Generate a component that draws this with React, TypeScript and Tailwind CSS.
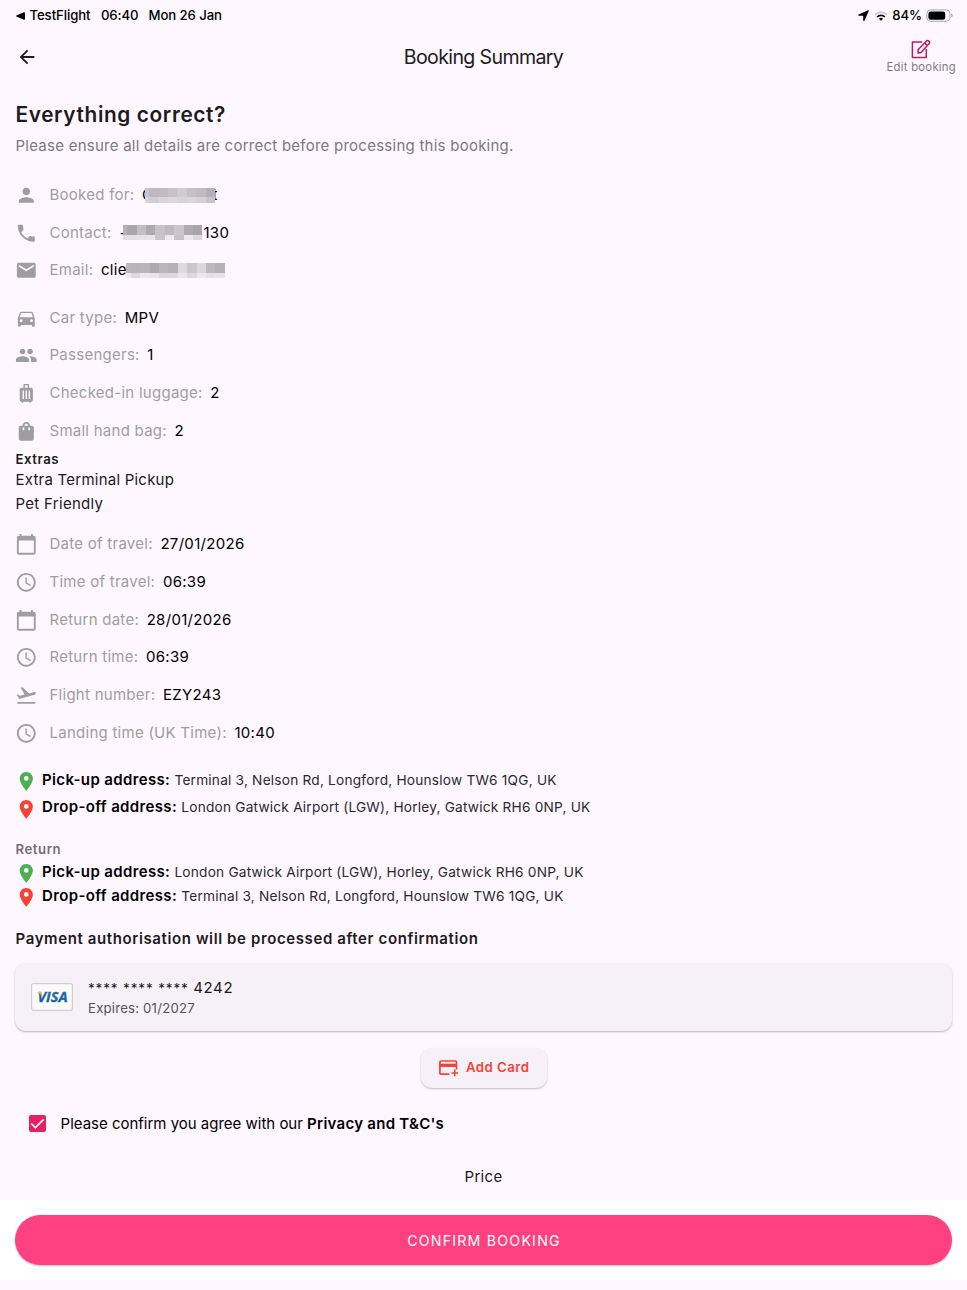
import React from "react";
import {
  MdPerson, MdPhone, MdEmail, MdDirectionsCar, MdPeople, MdLuggage, MdShoppingBag,
  MdCalendarToday, MdAccessTime, MdFlightTakeoff, MdLocationOn, MdArrowBack,
} from "react-icons/md";

type IconType = React.ComponentType<{ className?: string }>;

function Row({ icon: Icon, label, children }: { icon: IconType; label: string; children: React.ReactNode }) {
  return (
    <div className="flex h-[37.75px] shrink-0 items-center text-[15px]">
      <Icon className="-ml-[0.6px] mr-[12px] size-[22.6px] text-[#9e9e9e]" />
      <span className="whitespace-pre tracking-[0.26px] text-[#9e9e9e]">{label}</span>
      <span className="ml-[7.7px] flex items-center whitespace-pre tracking-[0.3px] text-black">{children}</span>
    </div>
  );
}

function Mosaic({ cells, first, split, className = "" }: { cells: [string, string][]; first: number; split: number; className?: string }) {
  return (
    <span className={`relative flex h-[15px] ${className}`}>
      {cells.map(([top, bottom], i) => (
        <span key={i} className="flex flex-col" style={{ width: i === 0 ? first : 9.42 }}>
          <span style={{ height: split, background: top }} />
          <span style={{ height: 15 - split, background: bottom }} />
        </span>
      ))}
    </span>
  );
}

function Address({ color, label, text, height }: { color: string; label: string; text: string; height: string }) {
  return (
    <div className={`flex shrink-0 items-center whitespace-pre ${height}`}>
      <MdLocationOn className={`relative top-[1.2px] -ml-[0.6px] mr-[4.5px] size-[22.6px] ${color}`} />
      <span className="text-[15px] font-semibold tracking-[0.36px] text-black">{label}</span>
      <span className="ml-[4.2px] text-[13.7px] tracking-[0.2px] text-[#2b2930]">{text}</span>
    </div>
  );
}

const bookedCells: [string, string][] = [
  ["#c9c5cb", "#d9d4da"], ["#bdb9be", "#d2cdd3"], ["#bfbbc0", "#dad5db"], ["#c6c2c7", "#ddd8de"],
  ["#d0cbd1", "#d8d3d9"], ["#c4c0c5", "#dbd6dc"], ["#bfbbc1", "#d5d0d6"], ["#b3afb4", "#c8c3c9"],
];
const contactCells: [string, string][] = [
  ["#b5b1b6", "#e2dce3"], ["#aaa6ab", "#e4dee5"], ["#c2bec3", "#e6e0e7"], ["#aeaaaf", "#e9e3ea"],
  ["#c8c3c9", "#c9c4ca"], ["#bdb9be", "#f0e9f1"], ["#cbc6cc", "#c6c2c7"], ["#aeaaaf", "#eee7ef"], ["#a8a4a9", "#ddd7de"],
];
const emailCells: [string, string][] = [
  ["#bbb7bc", "#eee7ef"], ["#b8b4b9", "#ddd7de"], ["#b9b5ba", "#eee7ef"], ["#ada9ae", "#eae4eb"],
  ["#b9b5ba", "#dcd7dd"], ["#b5b1b6", "#ded8df"], ["#ded8df", "#ebe5ec"], ["#cbc6cc", "#ddd7de"],
  ["#dcd6dd", "#eee7ef"], ["#bdb9be", "#e4dee5"], ["#b5b1b6", "#e8e2e9"],
];

export default function App() {
  return (
    <div className="flex h-[1290px] w-[967px] flex-col overflow-hidden bg-[#fef7ff] font-['Inter',sans-serif] text-[#1d1b20]">
      <div className="flex h-[31px] shrink-0 items-center pr-[14px] pl-[16px] text-[13.2px] font-medium tracking-[-0.1px] text-black">
        <svg className="mr-[4.5px] h-[8px] w-[9px]" viewBox="0 0 9 8"><path d="M.4 3.5 8 .2Q9 0 9 1v6q0 1-1 .7L.4 4.5Q-.2 4 .4 3.5Z" /></svg>
        <span>TestFlight</span>
        <span className="ml-[10.5px]">06:40</span>
        <span className="ml-[10px]">Mon 26 Jan</span>
        <svg className="ml-auto h-[11px] w-[11px]" viewBox="0 0 11 11"><path d="M10.1.2.7 4.6c-.9.4-.7 1.2.1 1.2h4.1c.2 0 .3.1.3.3v4.1c0 .9.9 1 1.3.2L10.8.9c.2-.5-.2-.9-.7-.7Z" /></svg>
        <svg className="ml-[5px] h-[10px] w-[14px]" viewBox="0 0 14 10">
          <path d="M1 3.8a8.5 8.5 0 0 1 12 0" fill="none" stroke="#c5c0c6" strokeWidth="1.5" />
          <path d="M3.1 6a5.5 5.5 0 0 1 7.8 0" fill="none" stroke="#000" strokeWidth="1.7" />
          <path d="M7 9.8 4.9 7.7a3 3 0 0 1 4.2 0Z" />
        </svg>
        <span className="ml-[4px]">84%</span>
        <svg className="ml-[4px] h-[13px] w-[27px]" viewBox="0 0 27 13">
          <rect x=".9" y=".9" width="23" height="11.4" rx="3.6" fill="none" stroke="#aaa5ab" />
          <rect x="2.4" y="2.4" width="16.8" height="8.4" rx="2.3" />
          <path d="M25.2 4.6q1.5.5 1.5 2t-1.5 2Z" fill="#aaa5ab" />
        </svg>
      </div>

      <div className="grid h-[53px] shrink-0 grid-cols-[1fr_auto_1fr] items-center px-[11px]">
        <MdArrowBack className="mb-[1px] ml-[4.5px] size-[22px]" />
        <h1 className="text-[19.6px] leading-none tracking-[-0.65px]">Booking Summary</h1>
        <div className="mb-[2px] flex flex-col items-center justify-self-end">
          <svg className="h-[20px] w-[20px]" viewBox="0 0 20 20" fill="none" stroke="#c2185b" strokeWidth="1.5" strokeLinejoin="round">
            <path d="M11 2.9H1.4v15.6h13.9V9.9" />
            <path d="M7.1 14.1V10.7L15.2 2.2a1.85 1.85 0 0 1 2.8 2.6L10 13.4ZM13.6 3.9l2.8 2.6" />
          </svg>
          <span className="mt-[1px] text-[11.3px] leading-[15px] tracking-[0.26px] text-[#817c83]">Edit booking</span>
        </div>
      </div>

      <div className="flex grow flex-col px-[15.5px]">
        <h2 className="mt-[12.3px] flex h-[36px] shrink-0 items-center text-[20.8px] font-semibold tracking-[0.63px]">Everything correct?</h2>
        <p className="mb-[16px] flex h-[28px] shrink-0 items-center text-[15px] tracking-[0.25px] text-[#7d797f]">Please ensure all details are correct before processing this booking.</p>

        <Row icon={MdPerson} label="Booked for:">
          <span>C</span>
          <Mosaic cells={bookedCells} first={4} split={9} className="-mr-[2.5px] -ml-[8px]" />
          <span>t</span>
        </Row>
        <Row icon={MdPhone} label="Contact:">
          <span>+</span>
          <Mosaic cells={contactCells} first={4.7} split={10} className="mr-[1px] -ml-[7px]" />
          <span>130</span>
        </Row>
        <Row icon={MdEmail} label="Email:">
          <span>clie</span>
          <Mosaic cells={emailCells} first={4.7} split={10} className="-ml-[0.7px]" />
        </Row>
        <div className="h-[9.4px] shrink-0" />
        <Row icon={MdDirectionsCar} label="Car type:">MPV</Row>
        <Row icon={MdPeople} label="Passengers:">1</Row>
        <Row icon={MdLuggage} label="Checked-in luggage:">2</Row>
        <Row icon={MdShoppingBag} label="Small hand bag:">2</Row>

        <div className="flex h-[19px] shrink-0 items-center text-[13.2px] font-semibold tracking-[0.55px]">Extras</div>
        <div className="flex h-[23.6px] shrink-0 items-center text-[15px] tracking-[0.23px]">Extra Terminal Pickup</div>
        <div className="mb-[9.4px] flex h-[23.6px] shrink-0 items-center text-[15px] tracking-[0.3px]">Pet Friendly</div>

        <Row icon={MdCalendarToday} label="Date of travel:">27/01/2026</Row>
        <Row icon={MdAccessTime} label="Time of travel:">06:39</Row>
        <Row icon={MdCalendarToday} label="Return date:">28/01/2026</Row>
        <Row icon={MdAccessTime} label="Return time:">06:39</Row>
        <Row icon={MdFlightTakeoff} label="Flight number:">EZY243</Row>
        <Row icon={MdAccessTime} label="Landing time (UK Time):">10:40</Row>

        <div className="h-[14.4px] shrink-0" />
        <Address height="h-[27.5px]" color="text-[#4caf50]" label="Pick-up address:" text="Terminal 3, Nelson Rd, Longford, Hounslow TW6 1QG, UK" />
        <Address height="h-[27.5px]" color="text-[#f44336]" label="Drop-off address:" text="London Gatwick Airport (LGW), Horley, Gatwick RH6 0NP, UK" />
        <div className="mt-[17.2px] flex h-[22px] shrink-0 items-center text-[13.2px] font-semibold tracking-[0.55px] text-[#757077]">Return</div>
        <Address height="h-[23.6px]" color="text-[#4caf50]" label="Pick-up address:" text="London Gatwick Airport (LGW), Horley, Gatwick RH6 0NP, UK" />
        <Address height="h-[23.6px]" color="text-[#f44336]" label="Drop-off address:" text="Terminal 3, Nelson Rd, Longford, Hounslow TW6 1QG, UK" />

        <div className="mt-[19.1px] flex h-[24px] shrink-0 items-center text-[15px] font-semibold tracking-[0.61px]">Payment authorisation will be processed after confirmation</div>

        <div className="mt-[12px] -mx-[0.5px] flex h-[68px] shrink-0 items-center rounded-[11px] bg-[#f6f1f8] pl-[16px] shadow-[0_1px_2px_rgba(0,0,0,0.28)]">
          <svg className="h-[28px] w-[42px]" viewBox="0 0 42 28">
            <defs>
              <linearGradient id="visa" x1="0" y1="0" x2="0" y2="1"><stop stopColor="#2a7fb8" /><stop offset="1" stopColor="#164f89" /></linearGradient>
            </defs>
            <rect x=".6" y=".6" width="40.8" height="26.8" rx="2" fill="#fafafa" stroke="#cfcdd2" strokeWidth="1.2" />
            <text x="6.5" y="19.3" fontSize="14.5" fontWeight="700" fontStyle="italic" fontFamily="Open Sans, sans-serif" fill="url(#visa)" stroke="#1d62a0" strokeWidth=".3" textLength="30" lengthAdjust="spacingAndGlyphs">VISA</text>
            <path d="M6 8.9h3.4q1 0 1.2 1l.8 3.6Q9.7 10.5 6 8.9Z" fill="#f3b44a" />
          </svg>
          <div className="ml-[15px] flex flex-col pt-[2px]">
            <span className="text-[15px] leading-[21px] tracking-[0.6px]"><span className="text-[13.5px] tracking-[0.85px]">**** **** **** </span>4242</span>
            <span className="text-[13.2px] leading-[19px] tracking-[0.2px] text-[#56525a]">Expires: 01/2027</span>
          </div>
        </div>

        <button className="mt-[17px] flex h-[40px] w-[126px] shrink-0 items-center self-center rounded-[11px] bg-[#f6f1f8] pl-[18px] text-[13.2px] font-semibold tracking-[0.48px] text-[#f44336] shadow-[0_1px_2px_rgba(0,0,0,0.25)]">
          <svg className="mt-[1px] mr-[7.5px] h-[17px] w-[20px]" viewBox="0 0 20 17" fill="none" stroke="#f44336" strokeWidth="1.7">
            <path d="M10.5 14.2H2.2q-1.3 0-1.3-1.3V2.3Q.9 1 2.2 1h14q1.3 0 1.3 1.3v7.2" />
            <path d="M.9 5.3h16.6" strokeWidth="3.3" />
            <path d="M15.7 9.6v6.7M12.4 13h6.7" />
          </svg>
          <span className="pt-[1px]">Add Card</span>
        </button>

        <div className="mt-[26px] flex h-[20px] shrink-0 items-center pl-[13.7px] text-[15px] tracking-[-0.01px] text-black">
          <span className="flex size-[17px] items-center justify-center rounded-[2px] bg-[#e91e63]">
            <svg className="size-[17px]" viewBox="0 0 17 17" fill="none" stroke="#fff" strokeWidth="1.7"><path d="m2.2 8.5 4.2 4.1 8.2-8.2" /></svg>
          </span>
          <span className="ml-[14.4px] whitespace-pre">Please confirm you agree with our <b className="font-semibold tracking-[0.27px]">Privacy and T&amp;C's</b></span>
        </div>
        <div className="mt-[33px] flex h-[20px] shrink-0 items-center justify-center text-[15px] tracking-[0.3px]">Price</div>
      </div>

      <div className="mb-[10px] flex h-[80px] shrink-0 items-center bg-white px-[15px]">
        <button className="h-[50px] w-full rounded-full bg-[#ff4081] pt-[1px] pl-[1px] text-[14.2px] tracking-[1.2px] text-white shadow-[0_1px_2px_rgba(0,0,0,0.25)]">CONFIRM BOOKING</button>
      </div>
    </div>
  );
}
